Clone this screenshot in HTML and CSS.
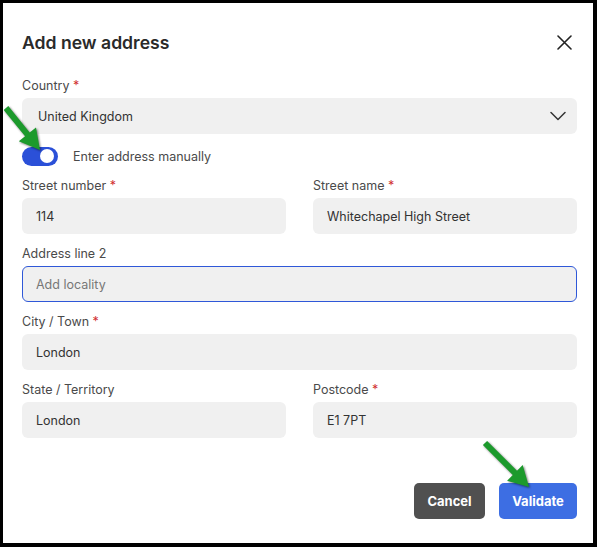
FILE: index.html
```html
<!DOCTYPE html>
<html lang="en">
<head>
  <meta charset="UTF-8" />
  <title>Add new address</title>
  <link rel="stylesheet" href="styles.css">
</head>
<body>

  <div class="modal">
    <div class="modal-header">
      <h2>Add new address</h2>
      <button class="close-btn" type="button" aria-label="Close">
        <svg width="15" height="15" viewBox="0 0 15 15"><path d="M1 1 L14 14 M14 1 L1 14" stroke="#222" stroke-width="1.6" fill="none" stroke-linecap="round"/></svg>
      </button>
    </div>

    <form class="address-form">
      <div class="field">
        <label>Country <span class="req">*</span></label>
        <div class="select">
          <span>United Kingdom</span>
          <svg width="16" height="10" viewBox="0 0 16 10"><path d="M1 1.5 L8 8.5 L15 1.5" stroke="#333" stroke-width="1.5" fill="none" stroke-linecap="round" stroke-linejoin="round"/></svg>
        </div>
      </div>

      <div class="switch-row">
        <span class="switch on"><span class="knob"></span></span>
        <span>Enter address manually</span>
      </div>

      <div class="row">
        <div class="field">
          <label>Street number <span class="req">*</span></label>
          <input type="text" value="114">
        </div>
        <div class="field">
          <label>Street name <span class="req">*</span></label>
          <input type="text" value="Whitechapel High Street">
        </div>
      </div>

      <div class="field">
        <label>Address line 2</label>
        <input type="text" class="focused" placeholder="Add locality">
      </div>

      <div class="field">
        <label>City / Town <span class="req">*</span></label>
        <input type="text" value="London">
      </div>

      <div class="row">
        <div class="field">
          <label>State / Territory</label>
          <input type="text" value="London">
        </div>
        <div class="field">
          <label>Postcode <span class="req">*</span></label>
          <input type="text" value="E1 7PT">
        </div>
      </div>

      <div class="actions">
        <button type="button" class="btn btn-cancel">Cancel</button>
        <button type="button" class="btn btn-primary">Validate</button>
      </div>
    </form>
  </div>

  <!-- help arrows drawn over the form -->
  <svg class="pointers" width="597" height="547" viewBox="0 0 597 547">
    <polygon points="8.3,106.1 29.7,132.5 36,127.5 40,150 18.8,141.3 25.1,136.3 3.7,109.9" />
    <polygon points="487.1,440.9 517,470.8 522.7,465.1 529,487 507.1,480.7 512.8,475 482.9,445.1" />
  </svg>

</body>
</html>
```

FILE: styles.css
```css
* {
  box-sizing: border-box;
}

body {
  margin: 0;
  font-family: Inter, "Noto Sans", Arial, sans-serif;
  background: #fff;
  color: #333;
}

.modal {
  width: 597px;
  height: 547px;
  border-style: solid;
  border-color: #000;
  border-width: 3px 4px 4px 3px;
  background: #fff;
  padding: 29px 16px 0 19px;
}

.modal-header {
  display: flex;
  justify-content: space-between;
  align-items: center;
  height: 22px;
  margin-bottom: 24px;
}

.modal-header h2 {
  margin: 0;
  font-size: 17.6px;
  font-weight: 600;
  color: #2a2a2a;
  line-height: 22px;
}

.close-btn {
  background: none;
  border: none;
  padding: 0;
  margin-right: 5px;
  margin-top: -2px;
  display: flex;
  cursor: pointer;
}

.address-form {
  display: flex;
  flex-direction: column;
}

.field {
  display: flex;
  flex-direction: column;
  margin-bottom: 12px;
}

.field label {
  font-size: 12.5px;
  line-height: 16px;
  color: #4a4a4a;
  margin-bottom: 4px;
}

.req {
  color: #d12f2f;
}

.row {
  display: grid;
  grid-template-columns: 1fr 1fr;
  column-gap: 27px;
}

input, .select {
  height: 36px;
  width: 100%;
  background: #f0f0f0;
  border: 1px solid transparent;
  border-radius: 6px;
  font: inherit;
  font-size: 12.5px;
  color: #333;
  padding: 0 13px;
  outline: none;
}

input::placeholder {
  color: #777;
}

input.focused {
  border-color: #2f58d8;
}

.select {
  display: flex;
  align-items: center;
  justify-content: space-between;
  padding: 0 10px 0 15px;
}

.switch-row {
  display: flex;
  align-items: center;
  height: 20px;
  gap: 15px;
  font-size: 12.5px;
  color: #4a4a4a;
  margin-bottom: 12px;
}

.switch {
  width: 36px;
  height: 19px;
  border-radius: 10px;
  background: #ccc;
  display: flex;
  align-items: center;
  padding: 0 4px;
}

.switch.on {
  background: #2b50d8;
  justify-content: flex-end;
}

.knob {
  width: 14px;
  height: 14px;
  border-radius: 50%;
  background: #fff;
}

.actions {
  display: flex;
  justify-content: flex-end;
  gap: 14px;
  margin-top: 33px;
}

.btn {
  height: 36px;
  border: none;
  border-radius: 5px;
  font: inherit;
  font-size: 13px;
  font-weight: 700;
  color: #fff;
  cursor: pointer;
}

.btn-cancel {
  width: 71px;
  background: #505050;
}

.btn-primary {
  width: 78px;
  background: #3d6ee3;
}

.pointers {
  position: absolute;
  top: 0;
  left: 0;
  pointer-events: none;
  fill: #1c9a2c;
  filter: drop-shadow(1px 1px 1px rgba(0,0,0,0.55));
}
```
